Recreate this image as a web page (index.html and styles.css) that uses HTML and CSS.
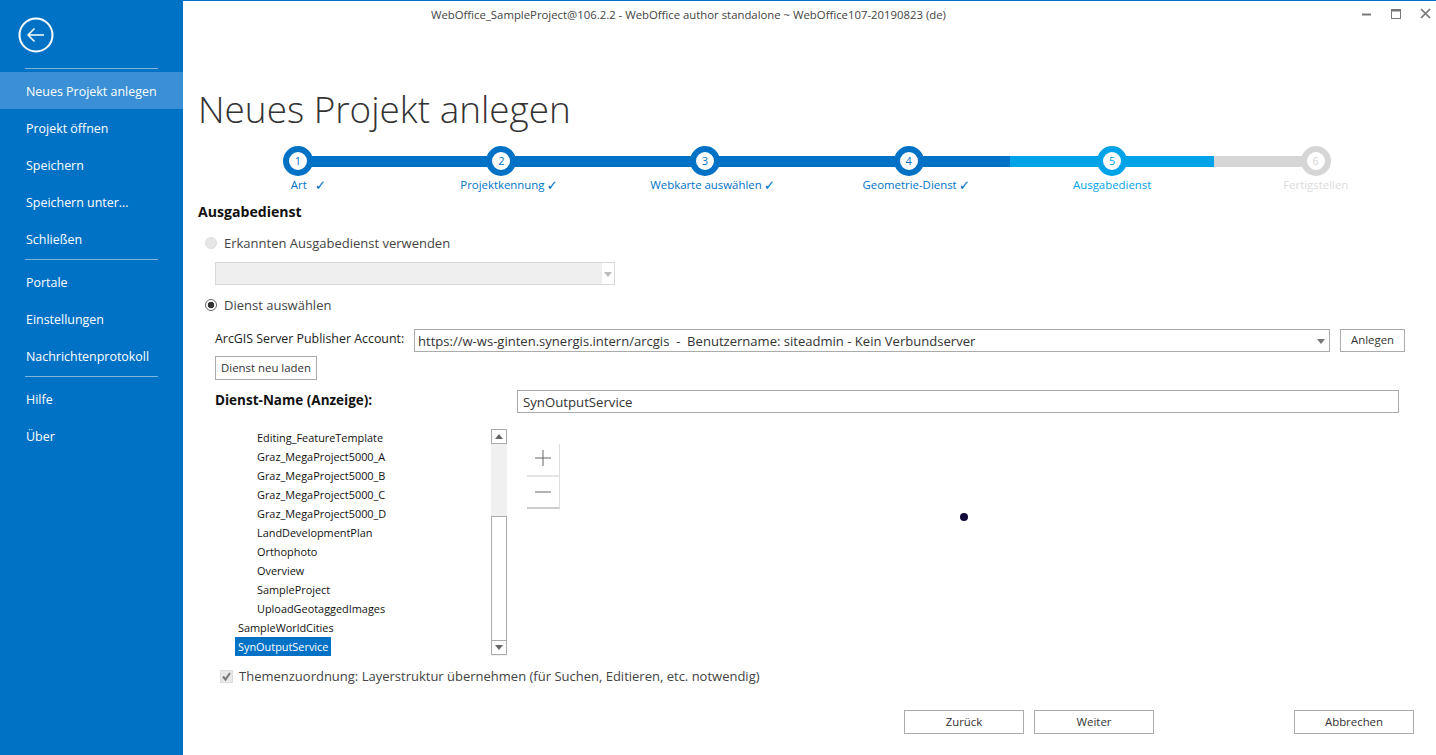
FILE: index.html
```html
<!DOCTYPE html>
<html lang="de">
<head>
<meta charset="utf-8">
<title>Neues Projekt anlegen</title>
<link rel="stylesheet" href="styles.css">
</head>
<body>
<div class="app">
  <aside class="side">
    <div class="back">
      <svg width="36" height="36" viewBox="0 0 36 36" fill="none" stroke="#fff"><circle cx="18" cy="18" r="16.5" stroke-width="2"/><path d="M10 18H26M16.5 11.5L10 18L16.5 24.5" stroke-width="1.5"/></svg>
    </div>
    <div class="sep first"></div>
    <a class="item active">Neues Projekt anlegen</a>
    <a class="item">Projekt öffnen</a>
    <a class="item">Speichern</a>
    <a class="item">Speichern unter...</a>
    <a class="item">Schließen</a>
    <div class="sep"></div>
    <a class="item">Portale</a>
    <a class="item">Einstellungen</a>
    <a class="item">Nachrichtenprotokoll</a>
    <div class="sep"></div>
    <a class="item">Hilfe</a>
    <a class="item">Über</a>
  </aside>
  <main class="main">
    <header class="titlebar">
      <div class="apptitle">WebOffice_SampleProject@106.2.2 - WebOffice author standalone ~ WebOffice107-20190823 (de)</div>
      <div class="winbtns">
        <svg width="14" height="14" viewBox="0 0 14 14"><path d="M1 7.5H10" stroke="#777" stroke-width="2"/></svg>
        <svg width="14" height="14" viewBox="0 0 14 14" fill="none" stroke="#777"><rect x="1.5" y="2.5" width="9" height="9"/><path d="M1 3.5H11" stroke-width="2"/></svg>
        <svg width="14" height="14" viewBox="0 0 14 14" fill="none" stroke="#777" stroke-width="1.7"><path d="M2 2L11 11M11 2L2 11"/></svg>
      </div>
    </header>
    <h1 class="heading">Neues Projekt anlegen</h1>
    <ol class="stepper">
      <li class="step done"><div class="track"><i class="bar left"></i><i class="bar right on"></i><b class="dot">1</b></div><span class="lbl">Art<span class="tick far">&#10003;</span></span></li>
      <li class="step done"><div class="track"><i class="bar left on"></i><i class="bar right on"></i><b class="dot">2</b></div><span class="lbl">Projektkennung<span class="tick">&#10003;</span></span></li>
      <li class="step done"><div class="track"><i class="bar left on"></i><i class="bar right on"></i><b class="dot">3</b></div><span class="lbl">Webkarte auswählen<span class="tick">&#10003;</span></span></li>
      <li class="step done"><div class="track"><i class="bar left on"></i><i class="bar right on"></i><b class="dot">4</b></div><span class="lbl">Geometrie-Dienst<span class="tick">&#10003;</span></span></li>
      <li class="step current"><div class="track"><i class="bar left on"></i><i class="bar right on"></i><b class="dot">5</b></div><span class="lbl">Ausgabedienst</span></li>
      <li class="step todo"><div class="track"><i class="bar left on"></i><i class="bar right"></i><b class="dot">6</b></div><span class="lbl">Fertigstellen</span></li>
    </ol>
    <h2 class="section">Ausgabedienst</h2>
    <div class="radio-row off"><span class="radio"></span>Erkannten Ausgabedienst verwenden</div>
    <div class="combo disabled"><span class="arrow"></span></div>
    <div class="radio-row sel"><span class="radio"></span>Dienst auswählen</div>
    <div class="account">
      <label class="acc-label">ArcGIS Server Publisher Account:</label>
      <div class="combo url">https://w-ws-ginten.synergis.intern/arcgis &nbsp;-&nbsp; Benutzername: siteadmin - Kein Verbundserver<span class="arrow"></span></div>
      <button class="btn small anlegen">Anlegen</button>
    </div>
    <button class="btn small reload">Dienst neu laden</button>
    <div class="name-row">
      <label class="name-label">Dienst-Name (Anzeige):</label>
      <div class="input">SynOutputService</div>
    </div>
    <div class="work">
      <div class="list">
        <ul class="rows">
          <li class="deep">Editing_FeatureTemplate</li>
          <li class="deep">Graz_MegaProject5000_A</li>
          <li class="deep">Graz_MegaProject5000_B</li>
          <li class="deep">Graz_MegaProject5000_C</li>
          <li class="deep">Graz_MegaProject5000_D</li>
          <li class="deep">LandDevelopmentPlan</li>
          <li class="deep">Orthophoto</li>
          <li class="deep">Overview</li>
          <li class="deep">SampleProject</li>
          <li class="deep">UploadGeotaggedImages</li>
          <li>SampleWorldCities</li>
          <li class="picked">SynOutputService</li>
        </ul>
        <div class="scroll">
          <span class="sb up"></span>
          <span class="thumb"></span>
          <span class="sb down"></span>
        </div>
      </div>
      <div class="map">
        <div class="zoom">
          <span class="z"><svg width="16" height="16" viewBox="0 0 16 16" stroke="#666"><path d="M8 0V16M0 8H16"/></svg></span>
          <span class="z"><svg width="16" height="16" viewBox="0 0 16 16" stroke="#666"><path d="M0 8H16"/></svg></span>
        </div>
        <span class="pin"></span>
      </div>
    </div>
    <div class="check-row"><span class="check"><svg width="13" height="13" viewBox="0 0 13 13" fill="none" stroke="#777" stroke-width="2"><path d="M3 6.5L5.5 9.5L10 3"/></svg></span>Themenzuordnung: Layerstruktur übernehmen (für Suchen, Editieren, etc. notwendig)</div>
    <footer class="actions">
      <button class="btn wide">Zurück</button>
      <button class="btn wide">Weiter</button>
      <button class="btn wide cancel">Abbrechen</button>
    </footer>
  </main>
</div>
</body>
</html>
```
FILE: styles.css
```css
* { box-sizing: border-box; }
html, body { margin: 0; height: 100%; }
body { font-family: "Open Sans", "Noto Sans", sans-serif; font-size: 12px; color: #333; background: #fff; overflow: hidden; }
.app { display: flex; width: 1436px; height: 755px; }
.side { width: 183px; flex: none; background: #0072c6; color: #fff; }
.back { padding: 17px 0 0 18px; height: 68px; }
.back svg { display: block; }
.sep { height: 1px; background: #7db5e1; margin: 2px 0 3px 25px; width: 133px; }
.sep.first { margin: 0 0 3px 25px; }
.item { display: block; height: 37px; line-height: 39px; padding-left: 26px; font-size: 12.45px; }
.item.active { background: #3a8fd5; }
.main { flex: 1; position: relative; border-top: 1px solid #0072c6; min-width: 0; }
.titlebar { height: 28px; position: relative; display: flex; }
.apptitle { font-size: 11.35px; color: #444; line-height: 27px; margin-left: 248px; }
.winbtns { position: absolute; right: 3px; top: 6px; display: flex; gap: 15px; }
.winbtns svg { display: block; }
.heading { margin: 49px 0 0 15px; font-size: 36.9px; font-weight: 300; line-height: 63px; height: 64px; color: #333; }
.stepper { list-style: none; margin: 4px 0 0 13px; padding: 0; display: flex; width: 1222px; }
.step { width: 203.6px; flex: none; display: flex; flex-direction: column; align-items: center; }
.track { width: 100%; height: 30px; display: grid; grid-template-columns: 1fr 1fr; align-items: center; }
.bar { grid-row: 1; height: 11px; display: block; }
.bar.left { grid-column: 1; }
.bar.right { grid-column: 2; }
.bar.on { background: #0072c6; }
.current .bar.on { background: #00a2e8; }
.todo .bar.on { background: #d6d6d6; }
.dot { grid-row: 1; grid-column: 1 / 3; justify-self: center; width: 30px; height: 30px; border-radius: 50%; border: 6px solid #0072c6; background: #fff; color: #0072c6; font-size: 11px; font-weight: 400; line-height: 18px; text-align: center; }
.current .dot { border-color: #00a2e8; color: #00a2e8; }
.todo .dot { border-color: #d6d6d6; color: #d6d6d6; }
.lbl { position: relative; font-size: 11.4px; line-height: 16px; margin-top: 1px; color: #0072c6; }
.done .lbl { margin-left: 2px; }
.tick { position: absolute; left: 100%; top: 0; margin-left: 2px; font-family: "DejaVu Sans", sans-serif; font-size: 13.5px; line-height: 16px; }
.tick.far { margin-left: 8px; }
.current .lbl { color: #00a2e8; }
.todo .lbl { color: #dcdcdc; }
.section { margin: 9px 0 0 15px; font-size: 14.1px; font-weight: 700; line-height: 20px; color: #111; }
.radio-row { display: flex; align-items: center; height: 20px; margin: 11px 0 0 22px; font-size: 13px; color: #444; }
.radio { width: 12px; height: 12px; border-radius: 50%; margin-right: 7px; border: 1px solid #bbb; background: #fff; flex: none; }
.off .radio { background: #e6e6e6; border-color: #ddd; }
.sel .radio { background: radial-gradient(circle, #333 0 3px, #fff 3.6px); border-color: #666; }
.combo { position: relative; border: 1px solid #ababab; height: 23px; }
.combo.disabled { width: 400px; margin: 9px 0 0 32px; background: #efefef; border-color: #d9d9d9; }
.combo.disabled::after { content: ""; position: absolute; right: 0; top: 0; bottom: 0; width: 12px; background: #fff; }
.arrow { position: absolute; right: 4px; top: 9px; width: 0; height: 0; border: 4px solid transparent; border-top: 5px solid #777; border-bottom: 0; z-index: 1; }
.combo.disabled .arrow { border-top-color: #bbb; right: 2px; }
.radio-row.sel { margin-top: 10px; }
.account { display: flex; margin: 14px 0 0 32px; height: 23px; align-items: flex-start; }
.acc-label { width: 199px; flex: none; font-size: 12.4px; line-height: 19px; color: #222; }
.combo.url { width: 916px; height: 23px; font-size: 13.05px; line-height: 23px; padding-left: 3px; color: #333; white-space: nowrap; }
.btn { font-family: inherit; font-size: 11.4px; color: #333; background: #fff; border: 1px solid #ababab; padding: 0; border-radius: 0; display: block; }
.small { height: 23px; padding-bottom: 2px; }
.anlegen { width: 65px; margin-left: 10px; }
.reload { width: 102px; height: 24px; margin: 4px 0 0 32px; }
.name-row { display: flex; margin: 10px 0 0 32px; height: 23px; }
.name-label { width: 302px; flex: none; font-size: 13.5px; font-weight: 700; line-height: 20px; color: #111; }
.input { width: 882px; border: 1px solid #ababab; height: 23px; font-size: 13.2px; line-height: 22px; padding-left: 5px; color: #333; }
.work { display: flex; margin: 15px 0 0 52px; height: 228px; }
.list { width: 272px; height: 228px; flex: none; display: flex; }
.rows { list-style: none; margin: 0; padding: 0; width: 256px; flex: none; }
.rows li { height: 19px; line-height: 19px; font-size: 10.9px; color: #111; padding-left: 3px; width: max-content; padding-right: 3px; }
.rows .deep { margin-left: 19px; }
.rows .picked { background: #0072c6; color: #fff; }
.scroll { width: 16px; flex: none; display: flex; flex-direction: column; background: #f0f0f0; height: 227px; margin-top: 1px; }
.sb { height: 15px; flex: none; background: #fff; border: 1px solid #ababab; position: relative; }
.sb::after { content: ""; position: absolute; left: 3px; width: 0; height: 0; border: 4px solid transparent; }
.up::after { top: 4px; border-top: 0; border-bottom: 5px solid #666; }
.down::after { top: 4px; border-bottom: 0; border-top: 5px solid #666; }
.thumb { flex: none; height: 124px; margin-top: 72px; background: #fff; border: 1px solid #ababab; border-bottom: 0; }
.map { flex: 1; position: relative; }
.zoom { position: absolute; left: 20px; top: 16px; width: 33px; border-right: 1px solid #ddd; border-bottom: 2px solid #ccc; }
.z { display: flex; height: 31px; padding-bottom: 3px; align-items: center; justify-content: center; }
.z + .z { height: 32px; padding-bottom: 0; border-top: 2px solid #e4e4e4; }
.z svg { display: block; }
.pin { position: absolute; left: 453px; top: 85px; width: 8px; height: 8px; border-radius: 50%; background: #120a3a; }
.check-row { display: flex; align-items: center; height: 20px; margin: 10px 0 0 37px; font-size: 13px; color: #444; }
.check { width: 13px; height: 13px; background: #e8e8e8; border: 1px solid #ddd; margin-right: 6px; flex: none; display: flex; }
.check svg { display: block; margin: -1px; }
.actions { display: flex; margin: 24px 0 0 721px; }
.wide { width: 120px; height: 24px; margin-right: 10px; padding-bottom: 1px; }
.cancel { margin-left: 130px; margin-right: 0; }
```
